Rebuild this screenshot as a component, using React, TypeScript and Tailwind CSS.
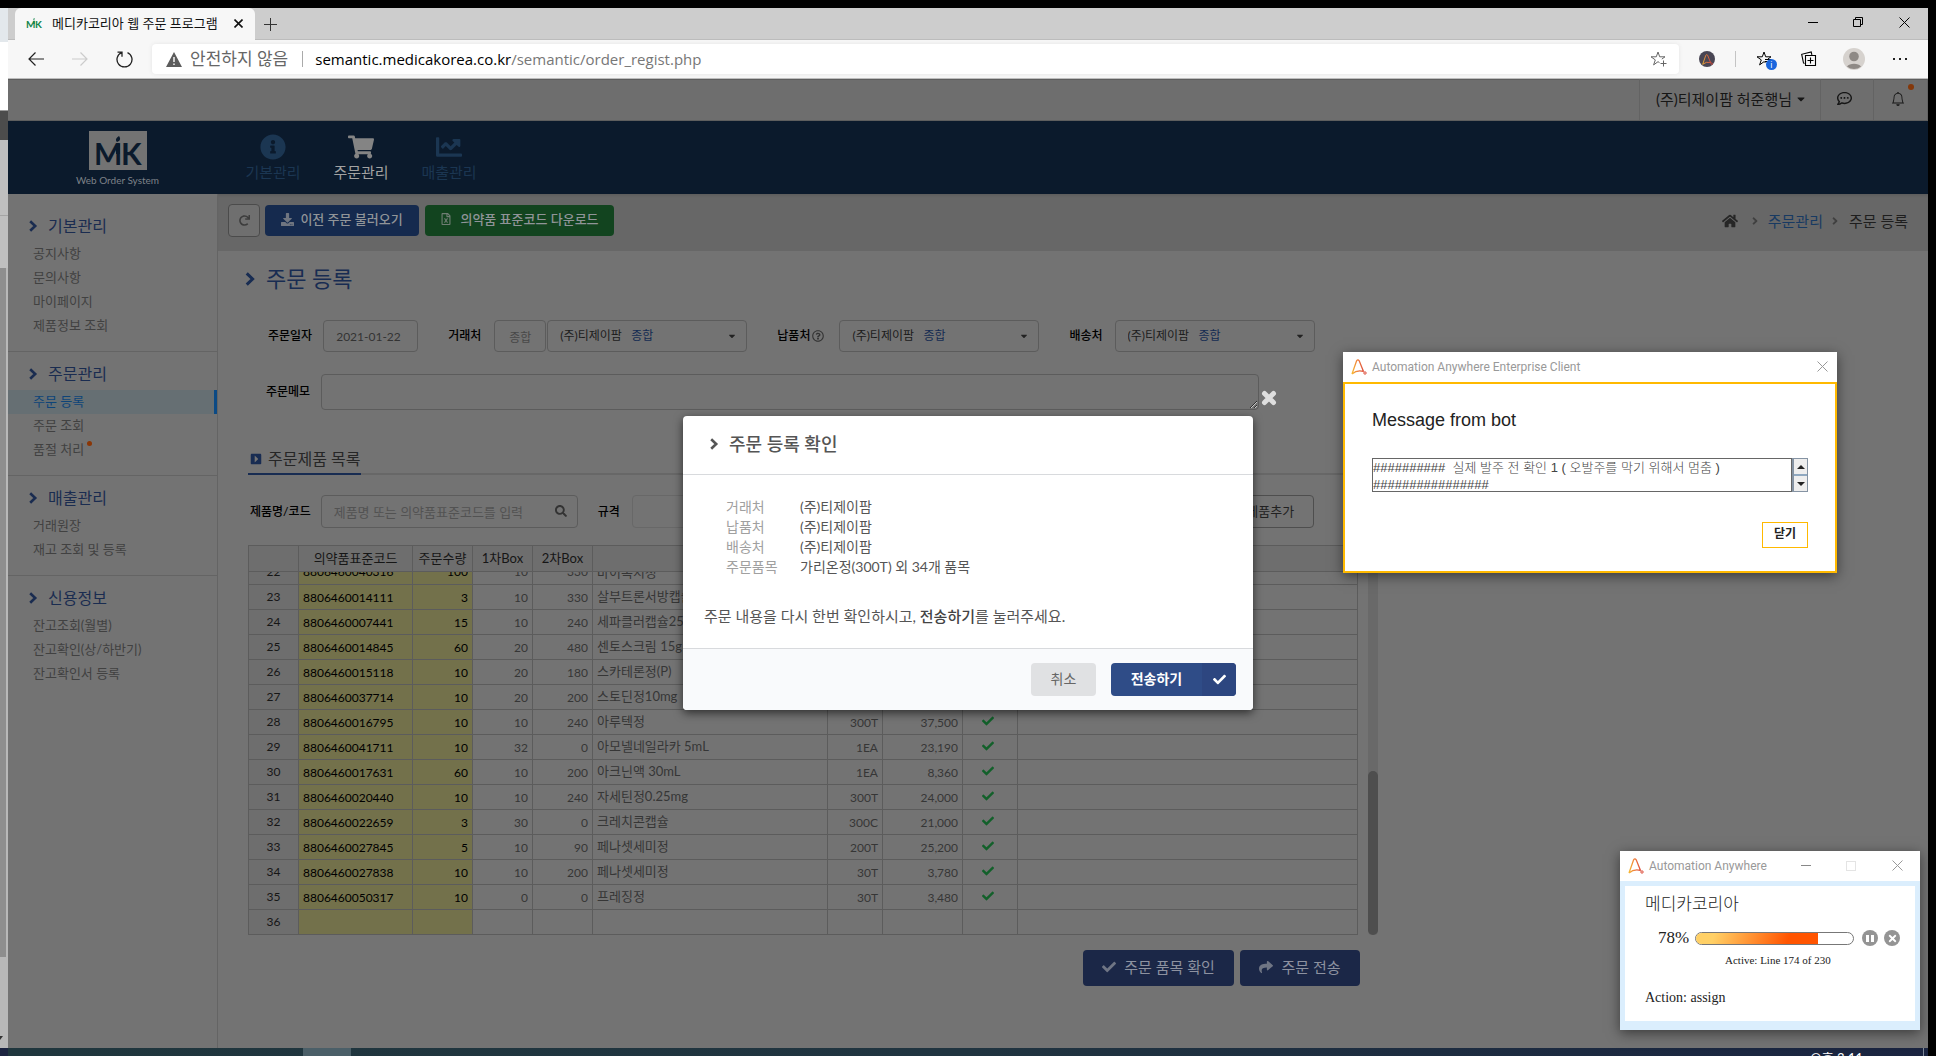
import React from "react";
import {
  FaInfoCircle, FaShoppingCart, FaChartLine, FaDownload, FaRegFileExcel, FaRedo, FaHome,
  FaAngleRight, FaCaretDown, FaRegCommentDots, FaCheck, FaShare, FaTimes,
  FaSearch, FaRegQuestionCircle, FaCaretSquareRight,
} from "react-icons/fa";
import { BsBell } from "react-icons/bs";

/* ---------- data ---------- */

type MenuItem = { label: string; active?: boolean; dot?: boolean };

const menu: { title: string; items: MenuItem[] }[] = [
  { title: "기본관리", items: [{ label: "공지사항" }, { label: "문의사항" }, { label: "마이페이지" }, { label: "제품정보 조회" }] },
  { title: "주문관리", items: [{ label: "주문 등록", active: true }, { label: "주문 조회" }, { label: "품절 처리", dot: true }] },
  { title: "매출관리", items: [{ label: "거래원장" }, { label: "재고 조회 및 등록" }] },
  { title: "신용정보", items: [{ label: "잔고조회(월별)" }, { label: "잔고확인(상/하반기)" }, { label: "잔고확인서 등록" }] },
];

type Row = [string, string, string, string, string, string, string, string];

const rows: Row[] = [
  ["23", "8806460014111", "3", "10", "330", "살부트론서방캡슐", "", ""],
  ["24", "8806460007441", "15", "10", "240", "세파클러캡슐250mg", "", ""],
  ["25", "8806460014845", "60", "20", "480", "센토스크림 15g", "", ""],
  ["26", "8806460015118", "10", "20", "180", "스카테론정(P)", "", ""],
  ["27", "8806460037714", "10", "20", "200", "스토딘정10mg", "", ""],
  ["28", "8806460016795", "10", "10", "240", "아루텍정", "300T", "37,500"],
  ["29", "8806460041711", "10", "32", "0", "아모넬네일라카 5mL", "1EA", "23,190"],
  ["30", "8806460017631", "60", "10", "200", "아크닌액 30mL", "1EA", "8,360"],
  ["31", "8806460020440", "10", "10", "240", "자세틴정0.25mg", "300T", "24,000"],
  ["32", "8806460022659", "3", "30", "0", "크레치콘캡슐", "300C", "21,000"],
  ["33", "8806460027845", "5", "10", "90", "페나셋세미정", "200T", "25,200"],
  ["34", "8806460027838", "10", "10", "200", "페나셋세미정", "30T", "3,780"],
  ["35", "8806460050317", "10", "0", "0", "프레징정", "30T", "3,480"],
  ["36", "", "", "", "", "", "", ""],
];

/* ---------- drawings ---------- */

function MkMark({ className }: { className: string }) {
  return (
    <svg viewBox="0 0 48 32" className={`overflow-visible ${className}`} fill="currentColor" aria-hidden="true">
      <text x="0" y="30" fontSize="30" fontWeight="700" fontFamily="Lato">M</text>
      <text x="27" y="30" fontSize="30" fontWeight="700" fontFamily="Lato">K</text>
      <path d="M23 7c-2-2-1-4 2-6 2 3 1 5-2 6z" />
      <rect x="22" y="9" width="4" height="10" />
    </svg>
  );
}

function Chevron({ className }: { className: string }) {
  return (
    <svg viewBox="0 0 10 12" className={className} fill="none" stroke="currentColor" strokeWidth="2.6" aria-hidden="true">
      <path d="M2.200 1.200 7.200 6l-5 4.800" />
    </svg>
  );
}

function AaLogo({ className, id }: { className: string; id: string }) {
  return (
    <svg viewBox="0 0 16 16" className={className} fill="none" aria-hidden="true">
      <defs>
        <linearGradient id={id} x1="0" y1="0" x2="1" y2="0">
          <stop offset="0" stopColor="#f7b832" />
          <stop offset="0.5" stopColor="#ee7b3c" />
          <stop offset="1" stopColor="#dd4f3c" />
        </linearGradient>
      </defs>
      <path d="M1 15 5.6 1.8Q6.9-.2 8.2 1.8L12.6 12.8M1 15Q6 10.6 12.4 12.4" stroke={`url(#${id})`} strokeWidth="1.3" />
      <circle cx="14" cy="14" r="1.2" stroke="#dd4f3c" />
    </svg>
  );
}

function StarIcon({ plus }: { plus?: boolean }) {
  return (
    <svg viewBox="0 0 17 17" className="size-[17px]" fill="none" stroke="currentColor" strokeWidth="1" aria-hidden="true">
      <path d="M9.5 11.6 8 10.7 3.6 13.9 5.3 8.9 1 5.8H6.3L8 1 9.7 5.8H15L11.8 8.1" />
      {plus ? <path d="M13.5 9.5v6M10.5 12.5h6" /> : <path d="M9 8.5h6M9 10.5h4" />}
    </svg>
  );
}

function BackArrow({ className }: { className: string }) {
  return (
    <svg viewBox="0 0 16 14" className={className} fill="none" stroke="currentColor" strokeWidth="1.2" aria-hidden="true">
      <path d="M7.5 0.5 1 7l6.500 6.500M1 7h15" />
    </svg>
  );
}

function CloseLines({ className }: { className: string }) {
  return (
    <svg viewBox="0 0 11 11" className={className} stroke="currentColor" strokeWidth="1" aria-hidden="true">
      <path d="M.5.5l10 10M10.500.5l-10 10" />
    </svg>
  );
}

/* ---------- browser chrome ---------- */

function TabStrip() {
  return (
    <div className="flex h-8 shrink-0 items-stretch bg-[#cdcdcd] pl-[7px] shadow-[inset_0_-1px_0_#bcbcbc]">
      <div className="flex w-[240px] items-center rounded-t-md bg-[#f7f7f7] pl-[11px] pr-3 pb-[2px]">
        <MkMark className="h-3 w-4 text-[#12854a]" />
        <span className="ml-[10px] flex-1 whitespace-nowrap text-[13px] leading-5 text-[#111]">메디카코리아 웹 주문 프로그램</span>
        <button type="button" aria-label="탭 닫기" className="text-[#111]">
          <svg viewBox="0 0 9 9" className="size-[9px]" stroke="currentColor" strokeWidth="1.6"><path d="M.5.5l8 8M8.500.5l-8 8" /></svg>
        </button>
      </div>
      <button type="button" aria-label="새 탭" className="ml-[9px] text-[#333]">
        <svg viewBox="0 0 13 13" className="size-[13px]" stroke="currentColor"><path d="M6.500 0v13M0 6.500h13" /></svg>
      </button>
      <div className="ml-auto flex w-[138px] items-center justify-around pb-1 text-black">
        <button type="button" aria-label="최소화">
          <svg viewBox="0 0 10 10" className="size-[10px]" stroke="currentColor"><path d="M0 5.500h10" /></svg>
        </button>
        <button type="button" aria-label="이전 크기로">
          <svg viewBox="0 0 10 10" className="size-[10px]" fill="none" stroke="currentColor"><path d="M.5 2.500h7v7h-7zM2.500 2.500v-2h7v7h-2" /></svg>
        </button>
        <button type="button" aria-label="닫기"><CloseLines className="size-[11px]" /></button>
      </div>
    </div>
  );
}

function AddressBar() {
  return (
    <div className="flex h-[39px] shrink-0 items-center border-b border-[#bdbdbd] bg-[#f7f7f7] pl-5 text-[#222]">
      <button type="button" aria-label="뒤로"><BackArrow className="h-[14px] w-4" /></button>
      <button type="button" aria-label="앞으로" className="ml-7 text-[#ccc]"><BackArrow className="h-[14px] w-4 -scale-x-100" /></button>
      <button type="button" aria-label="새로 고침" className="ml-7">
        <svg viewBox="0 0 17 17" className="size-[17px]" fill="none" stroke="currentColor" strokeWidth="1.300"><path d="M5.500 1.600A7.500 7.500 0 1 0 11.500 1.600M1.500 1.200h4.500v4.500" /></svg>
      </button>
      <div className="ml-[19px] flex h-[30px] flex-1 items-center rounded bg-white pl-[14px] pr-3 shadow-[0_0_4px_#e4e4e4]">
        <svg viewBox="0 0 16 15" className="h-[15px] w-4 text-[#5c5c5c]" aria-hidden="true">
          <path d="M8 0 16 15H0z" fill="currentColor" />
          <path d="M8 5v5M8 11.500v1.500" stroke="#fff" strokeWidth="1.400" />
        </svg>
        <span className="ml-2 text-[17px] leading-6 text-[#666]">안전하지 않음</span>
        <span className="ml-[14px] mr-3 h-4 w-px bg-[#aaa]" />
        <a href="#address" className="text-[15px] leading-6 text-black">
          semantic.medicakorea.co.kr<span className="text-[#777]">/semantic/order_regist.php</span>
        </a>
        <button type="button" aria-label="즐겨찾기 추가" className="ml-auto text-[#666]"><StarIcon plus /></button>
      </div>
      <div className="flex items-center pl-5 pr-[21px]">
        <span className="flex size-4 items-center justify-center rounded-full bg-[#494654]">
          <AaLogo className="size-[11px]" id="aa-ext" />
        </span>
        <span className="ml-5 h-4 w-px bg-[#c4c4c4]" />
        <button type="button" aria-label="즐겨찾기" className="relative ml-5 text-black">
          <StarIcon />
          <span className="absolute -right-1 top-2 size-[11px] rounded-full bg-[#1a66dd] text-[9px] leading-[11px] text-white">i</span>
        </button>
        <button type="button" aria-label="컬렉션" className="ml-[28px] text-black">
          <svg viewBox="0 0 16 16" className="size-4" fill="none" stroke="currentColor" strokeWidth="1.100">
            <path d="M4.500 4.500h10v10h-10zM9.500 6.500v6M6.500 9.500h6M3.500 12.500 2.500 12 .700 3.300 10.200 1l.7 2.800" />
          </svg>
        </button>
        <button type="button" aria-label="프로필" className="ml-[26px]">
          <svg viewBox="0 0 22 22" className="size-[22px]">
            <circle cx="11" cy="11" r="11" fill="#d6d2ce" />
            <circle cx="11" cy="8.500" r="4.800" fill="#8e8985" />
            <path d="M4 18.500a8 5.500 0 0 1 14 0A11 11 0 0 1 4 18.500z" fill="#8e8985" />
          </svg>
        </button>
        <button type="button" aria-label="설정 및 기타" className="ml-7 flex w-[14px] justify-between">
          <i className="size-[2px] bg-[#222]" /><i className="size-[2px] bg-[#222]" /><i className="size-[2px] bg-[#222]" />
        </button>
      </div>
    </div>
  );
}

/* ---------- order page ---------- */

function UserBar() {
  return (
    <div className="flex h-[42px] shrink-0 justify-end border-b border-[#5e5e5e] bg-[#6e6e6e] text-[#161616] shadow-[inset_0_1px_0_#5e5e5e]">
      <button type="button" className="flex items-center gap-[3px] border-l border-[#636363] pb-[2px] pl-4 pr-[13px] text-[15px] leading-5">
        (주)티제이팜 허준행님<FaCaretDown className="size-3" />
      </button>
      <button type="button" aria-label="메시지" className="flex w-[53px] items-center justify-center border-l border-[#636363] pb-[2px] pr-[6px]">
        <FaRegCommentDots className="size-[15px]" />
      </button>
      <button type="button" aria-label="알림" className="relative flex w-[55px] items-center justify-center border-x border-[#636363] pb-[2px] pr-[6px]">
        <BsBell className="size-[14px]" />
        <span className="absolute right-[13px] top-[5px] size-[6px] rounded-full bg-[#84380a]" />
      </button>
    </div>
  );
}

function TopNav() {
  const items = [
    { label: "기본관리", Icon: FaInfoCircle, on: false },
    { label: "주문관리", Icon: FaShoppingCart, on: true },
    { label: "매출관리", Icon: FaChartLine, on: false },
  ];
  return (
    <header className="flex h-[73px] shrink-0 bg-[#0b1a2c]">
      <a href="#home" className="flex w-[221px] flex-col items-center pr-[2px] pt-[10px]">
        <span className="flex h-[39px] w-[58px] items-center justify-center bg-[#737373]">
          <MkMark className="h-8 w-12 text-[#0b1a2c]" />
        </span>
        <span className="mt-[2px] text-[10px] leading-4 text-[#7d8188]">Web Order System</span>
      </a>
      <nav className="flex">
        {items.map(({ label, Icon, on }) => (
          <a key={label} href="#nav" className={`flex w-[88px] flex-col items-center pt-[13px] text-[15px] leading-5 ${on ? "text-[#848484]" : "text-[#1b3652]"}`}>
            <Icon className="size-[26px]" />
            <span className={on ? "mt-[2px] text-[#a2a2a2]" : "mt-[2px]"}>{label}</span>
          </a>
        ))}
      </nav>
    </header>
  );
}

function Sidebar() {
  return (
    <aside className="w-[210px] shrink-0 border-r border-[#646464] pt-[10px]">
      {menu.map((section) => (
        <section key={section.title} className="border-b border-[#646464] pb-[13px] pt-[6px] last:border-b-0">
          <h2 className="flex h-8 items-center gap-[10px] pl-5 text-[16px] text-[#1a2c50]">
            <Chevron className="h-3 w-[10px]" />
            <span className="leading-6">{section.title}</span>
          </h2>
          <ul>
            {section.items.map((it) => (
              <li key={it.label}>
                <a
                  href="#menu"
                  className={`flex h-6 items-center pb-[2px] pl-[25px] text-[13px] leading-[22px] ${it.active ? "border-r-[3px] border-[#0b4a85] bg-[#666f73] text-[#0d4479]" : "text-[#414141]"}`}
                >
                  {it.label}
                  {it.dot && <span className="mb-3 ml-[3px] size-[5px] rounded-full bg-[#8a3606]" />}
                </a>
              </li>
            ))}
          </ul>
        </section>
      ))}
    </aside>
  );
}

function PartnerSelect({ id }: { id: string }) {
  return (
    <div className="relative w-[200px]">
      <select id={id} className="h-8 w-full appearance-none rounded border border-[#5c5c5c] bg-transparent px-3 text-[12px] leading-4 text-[#1c1c1c]">
        <option>(주)티제이팜</option>
      </select>
      <span className="pointer-events-none absolute left-[84px] top-2 text-[12px] leading-4 text-[#152c52]">종합</span>
      <FaCaretDown className="pointer-events-none absolute right-[10px] top-[11px] size-[10px] text-[#222]" />
    </div>
  );
}

const labelStyle = "text-[12px] font-medium leading-4 text-black";

function OrderForm() {
  return (
    <form className="flex flex-col">
      <div className="mt-6 flex items-center pl-[50px]">
        <label htmlFor="date" className={labelStyle}>주문일자</label>
        <input id="date" defaultValue="2021-01-22" className="ml-[11px] h-8 w-[95px] rounded border border-[#5c5c5c] px-3 text-[12px] text-[#333]" />
        <label htmlFor="client" className={`${labelStyle} ml-[30px]`}>거래처</label>
        <input aria-label="구분" defaultValue="종합" className="ml-[13px] mr-px h-8 w-[52px] rounded border border-[#5c5c5c] pl-[14px] text-[12px] text-[#484848]" />
        <PartnerSelect id="client" />
        <label htmlFor="supply" className={`${labelStyle} ml-[30px] flex items-center`}>
          납품처<FaRegQuestionCircle className="ml-[2px] size-3 text-[#333]" />
        </label>
        <div className="ml-[15px]"><PartnerSelect id="supply" /></div>
        <label htmlFor="ship" className={`${labelStyle} ml-[30px]`}>배송처</label>
        <div className="ml-3"><PartnerSelect id="ship" /></div>
      </div>

      <div className="mt-[22px] flex h-9 items-center pl-[48px]">
        <label htmlFor="memo" className={labelStyle}>주문메모</label>
        <textarea id="memo" className="ml-[11px] h-9 w-[938px] resize rounded border border-[#5c5c5c]" />
      </div>

      <div className="ml-[30px] mt-[37px] flex w-[1130px] border-b-2 border-[#676767]">
        <h2 className="-mb-[2px] flex h-7 items-center gap-[6px] border-b-2 border-[#182c52] pb-[2px] pl-[2px] pr-px text-[16px] leading-6 text-[#262626]">
          <FaCaretSquareRight className="size-3 text-[#182c52]" />주문제품 목록
        </h2>
      </div>

      <div className="mt-5 flex items-center pl-8">
        <label htmlFor="product" className={labelStyle}>제품명/코드</label>
        <div className="relative ml-[10px]">
          <input id="product" placeholder="제품명 또는 의약품표준코드를 입력" className="h-[33px] w-[257px] rounded border border-[#5c5c5c] px-3 text-[13px] placeholder:text-[#525252]" />
          <FaSearch className="absolute right-[11px] top-[10px] size-3 text-[#333]" />
        </div>
        <label htmlFor="spec" className={`${labelStyle} ml-5`}>규격</label>
        <input id="spec" className="ml-3 h-[33px] w-[120px] rounded border border-[#686868]" />
        <button type="button" className="ml-[464px] h-[33px] w-[98px] whitespace-nowrap rounded border border-[#4e4e4e] text-[13px] text-[#222]">+ 제품추가</button>
      </div>
    </form>
  );
}

const cell = "border border-[#5c5c5c]";

function ClippedText({ children }: { children: string }) {
  return <div className="flex h-3 items-end overflow-hidden"><span className="w-full shrink-0 leading-6">{children}</span></div>;
}

function OrderTable() {
  return (
    <div className="ml-[30px] mt-[17px] flex">
      <table className="w-[1110px] table-fixed border-collapse text-[12px] leading-[23px] text-[#363636]">
        <colgroup>
          <col className="w-[50px]" /><col className="w-[114px]" /><col className="w-[60px]" /><col className="w-[60px]" /><col className="w-[60px]" />
          <col className="w-[235px]" /><col className="w-[55px]" /><col className="w-[80px]" /><col className="w-[55px]" /><col />
        </colgroup>
        <thead>
          <tr className="h-[26px] bg-[#6e6e6e] text-[13px] text-[#161616]">
            {["", "의약품표준코드", "주문수량", "1차Box", "2차Box", "", "", "", "", ""].map((h, i) => (
              <th key={i} scope="col" className={`${cell} p-0 pb-[2px] font-normal leading-5`}>{h}</th>
            ))}
          </tr>
        </thead>
        <tbody>
          <tr className="h-[13px]">
            <td className={`${cell} bg-[#6e6e6e] p-0 text-center text-[#161616]`}><ClippedText>22</ClippedText></td>
            <td className={`${cell} bg-[#73714b] px-1 py-0 text-black`}><ClippedText>8806460040316</ClippedText></td>
            <td className={`${cell} bg-[#73714b] px-1 py-0 text-right text-black`}><ClippedText>100</ClippedText></td>
            <td className={`${cell} px-1 py-0 text-right`}><ClippedText>10</ClippedText></td>
            <td className={`${cell} px-1 py-0 text-right`}><ClippedText>330</ClippedText></td>
            <td className={`${cell} px-1 py-0 text-[13px]`}><ClippedText>바이독시정</ClippedText></td>
            <td className={cell} /><td className={cell} /><td className={cell} /><td className={cell} />
          </tr>
          {rows.map((r) => (
            <tr key={r[0]} className="h-[25px]">
              <td className={`${cell} bg-[#6e6e6e] p-0 pb-px text-center text-[#161616]`}>{r[0]}</td>
              <td className={`${cell} bg-[#73714b] px-1 py-0 text-black`}>{r[1]}</td>
              <td className={`${cell} bg-[#73714b] px-1 py-0 text-right text-black`}>{r[2]}</td>
              <td className={`${cell} px-1 py-0 text-right`}>{r[3]}</td>
              <td className={`${cell} px-1 py-0 text-right`}>{r[4]}</td>
              <td className={`${cell} whitespace-nowrap px-1 py-0 pb-px text-[13px]`}>{r[5]}</td>
              <td className={`${cell} px-1 py-0 text-right`}>{r[6]}</td>
              <td className={`${cell} px-1 py-0 text-right`}>{r[7]}</td>
              <td className={`${cell} p-0 pb-[3px]`}>{r[1] && <FaCheck className="ml-auto mr-[23px] size-3 text-[#12602a]" />}</td>
              <td className={cell} />
            </tr>
          ))}
        </tbody>
      </table>
      <div className="ml-[10px] flex w-[10px] flex-col justify-end rounded bg-[#696969]">
        <div className="h-[42%] rounded-full bg-[#4e4e4e]" />
      </div>
    </div>
  );
}

function OrderPage() {
  return (
    <main className="min-w-0 flex-1">
      <div className="flex h-[57px] items-center justify-between bg-[#676767] pb-[4px] pl-[10px] pr-5 shadow-[inset_0_3px_3px_-2px_#5a5a5a]">
        <div className="flex items-center text-[13px] font-medium leading-5 text-[#909498]">
          <button type="button" aria-label="새로 고침" className="flex h-[33px] w-8 items-center justify-center rounded border border-[#4b4b4b] bg-[#6f6f6f] text-[#3c3c3c]">
            <FaRedo className="size-[11px]" />
          </button>
          <button type="button" className="ml-[5px] flex h-[31px] w-[154px] items-center justify-center gap-[6px] rounded bg-[#152a4e] pb-[3px]">
            <FaDownload className="size-[13px] text-[#6f7580]" />이전 주문 불러오기
          </button>
          <button type="button" className="ml-[6px] flex h-[31px] w-[189px] items-center justify-center gap-2 rounded bg-[#12441f] pb-[3px]">
            <FaRegFileExcel className="size-3 text-[#6f7d73]" />의약품 표준코드 다운로드
          </button>
        </div>
        <nav className="flex items-center text-[15px] leading-5 text-[#1e1e1e]">
          <FaHome className="size-4 text-[#262626]" />
          <FaAngleRight className="ml-[11px] mr-[7px] size-3 text-[#404040]" />
          <a href="#orders" className="text-[#183a62]">주문관리</a>
          <FaAngleRight className="ml-[6px] mr-2 size-3 text-[#404040]" />
          <span>주문 등록</span>
        </nav>
      </div>
      <h1 className="mt-3 flex h-[33px] items-center gap-[10px] whitespace-nowrap pb-[2px] pl-[26px] text-[22px] leading-8 text-[#182c52]">
        <Chevron className="h-[14px] w-3" />주문 등록
      </h1>
      <OrderForm />
      <OrderTable />
      <div className="mt-[15px] flex w-[1142px] justify-end gap-[6px] text-[15px] leading-5 text-[#8d92a0]">
        <button type="button" className="flex h-9 w-[151px] items-center justify-center gap-2 rounded bg-[#1b2747] pb-[2px]">
          <FaCheck className="size-[14px] text-[#6f7584]" />주문 품목 확인
        </button>
        <button type="button" className="flex h-9 w-[120px] items-center justify-center gap-2 rounded bg-[#1b2747] pb-[2px]">
          <FaShare className="size-[14px] text-[#6f7584]" />주문 전송
        </button>
      </div>
    </main>
  );
}

function ConfirmModal() {
  const info = [
    ["거래처", "(주)티제이팜"],
    ["납품처", "(주)티제이팜"],
    ["배송처", "(주)티제이팜"],
    ["주문품목", "가리온정(300T) 외 34개 품목"],
  ];
  return (
    <div role="dialog" aria-label="주문 등록 확인" className="pointer-events-auto relative w-[570px] rounded bg-white text-[#555] shadow-[0_3px_10px_rgba(0,0,0,0.6)]">
      <button type="button" aria-label="닫기" className="absolute -right-6 -top-[26px] text-[#dedede]">
        <svg viewBox="0 0 16 16" className="size-4" stroke="currentColor" strokeWidth="5" strokeLinecap="round"><path d="M3.500 3.500l9 9M12.500 3.500l-9 9" /></svg>
      </button>
      <div className="flex h-[59px] items-center gap-[10px] border-b border-[#d8dadd] pb-[2px] pl-[26px] text-[18px] font-medium leading-6">
        <Chevron className="h-3 w-[10px]" />주문 등록 확인
      </div>
      <div className="h-[174px] border-b border-[#d8dadd] pl-[21px] pt-[22px]">
        <dl className="grid grid-cols-[74px_1fr] pl-[22px] text-[14px] leading-5">
          {info.map(([k, v]) => (
            <React.Fragment key={k}>
              <dt className="text-[#a0a0a0]">{k}</dt>
              <dd>{v}</dd>
            </React.Fragment>
          ))}
        </dl>
        <p className="mt-[29px] text-[15px] leading-5">
          주문 내용을 다시 한번 확인하시고, <b className="font-medium text-[#444]">전송하기</b>를 눌러주세요.
        </p>
      </div>
      <div className="flex h-[61px] items-center justify-end gap-[15px] rounded-b bg-[#f9fafc] pr-[17px] text-[14px] leading-5">
        <button type="button" className="h-[33px] w-[65px] rounded bg-[#e0e1e3] pb-[2px] text-[#666]">취소</button>
        <button type="button" className="flex h-[33px] w-[125px] items-center overflow-hidden rounded bg-[#2f4c87] font-bold text-white">
          <span className="flex-1 pb-[2px]">전송하기</span>
          <span className="flex h-full w-[34px] items-center justify-center bg-[#2d4680]"><FaCheck className="size-[13px]" /></span>
        </button>
      </div>
    </div>
  );
}

/* ---------- desktop windows ---------- */

function BotMessage() {
  return (
    <section className="absolute right-[99px] top-[352px] w-[494px] bg-white shadow-[0_3px_12px_rgba(0,0,0,0.5)]">
      <div className="flex h-[30px] items-center pb-px pl-2 pr-[9px] text-[#999]">
        <AaLogo className="size-4" id="aa-msg" />
        <span className="ml-[5px] flex-1 font-[family-name:Roboto] text-[12px] leading-5">Automation Anywhere Enterprise Client</span>
        <button type="button" aria-label="닫기"><CloseLines className="size-[11px]" /></button>
      </div>
      <div className="flex h-[191px] flex-col border-2 border-[#ffb900] pl-[27px] pr-[27px] pt-6">
        <h2 className="font-[family-name:'Liberation_Sans'] text-[18px] leading-6 text-[#222]">Message from bot</h2>
        <div className="mt-[26px] flex h-[34px]">
          <div className="flex-1 overflow-hidden border border-[#666] font-[family-name:'Liberation_Sans','Noto_Sans_CJK_KR',sans-serif] text-[13px] leading-[17px] text-[#444]">
            <p className="whitespace-pre font-light">##########  실제 발주 전 확인 1 ( 오발주를 막기 위해서 멈춤 )</p>
            <p>################</p>
          </div>
          <div className="flex w-4 flex-col border border-l-2 border-[#8593a3] text-[#222]">
            <button type="button" aria-label="위로" className="flex flex-1 items-center justify-center border-b-2 border-[#8fa8c0] bg-[#eee]">
              <svg viewBox="0 0 8 4" className="h-1 w-2" fill="currentColor"><path d="M0 4 4 0l4 4z" /></svg>
            </button>
            <button type="button" aria-label="아래로" className="flex flex-1 items-center justify-center bg-[#eee]">
              <svg viewBox="0 0 8 4" className="h-1 w-2" fill="currentColor"><path d="M0 0l4 4 4-4z" /></svg>
            </button>
          </div>
        </div>
        <button type="button" className="mt-[30px] h-[26px] w-[46px] self-end border border-[#ffb900] pb-[2px] text-[12px] font-bold leading-4 text-[#222]">닫기</button>
      </div>
    </section>
  );
}

function BotProgress() {
  return (
    <section className="absolute bottom-[26px] right-4 w-[300px] bg-white shadow-[0_3px_12px_rgba(0,0,0,0.5)]">
      <div className="flex h-[30px] items-center pb-px pl-2 pr-[17px] text-[#999]">
        <AaLogo className="size-4" id="aa-run" />
        <span className="ml-[5px] flex-1 font-[family-name:Roboto] text-[12px] leading-5">Automation Anywhere</span>
        <button type="button" aria-label="최소화" className="h-px w-[10px] bg-[#888]" />
        <button type="button" aria-label="최대화" className="ml-[35px] size-[10px] border border-[#e4e4e4]" />
        <button type="button" aria-label="닫기" className="ml-9"><CloseLines className="size-[11px]" /></button>
      </div>
      <div className="border-x-[5px] border-b-[9px] border-t-[5px] border-[#dbeefd] pb-[13px] pl-5 pt-2 font-[family-name:'Liberation_Serif','Noto_Sans_CJK_KR',serif] text-[#222]">
        <h2 className="text-[17px] font-light leading-[22px]">메디카코리아</h2>
        <div className="mt-3 flex items-center pl-[13px]">
          <span className="w-[37px] text-[17px] leading-5">78%</span>
          <div role="progressbar" aria-label="진행률" aria-valuenow={78} className="h-[13px] w-[159px] overflow-hidden rounded-full border border-[#777]">
            <div className="h-full w-[78%] bg-linear-[110deg,#ffd066_15%,#ff5400_75%]" />
          </div>
          <button type="button" aria-label="일시 중지" className="ml-2 flex size-4 items-center justify-center gap-[2px] rounded-full bg-[#949494]">
            <i className="h-[7px] w-[3px] bg-white" /><i className="h-[7px] w-[3px] bg-white" />
          </button>
          <button type="button" aria-label="중지" className="ml-[6px] flex size-4 items-center justify-center rounded-full bg-[#949494] text-white">
            <FaTimes className="size-[11px]" />
          </button>
        </div>
        <p className="mt-1 pl-20 text-[11px] leading-4">Active: Line 174 of 230</p>
        <p className="mt-5 text-[14px] leading-5">Action: assign</p>
      </div>
    </section>
  );
}

function WindowBehind() {
  return (
    <div className="flex w-2 shrink-0 flex-col bg-[#b8b8b8]" aria-hidden="true">
      <div className="h-[34px] bg-[#e3e8ec]" />
      <div className="h-[68px] bg-white" />
      <div className="h-[30px] border-t border-[#999] bg-[#4c4c4c]" />
      <div className="h-[76px] border-b border-[#a5a5a5] bg-[#bfbfbf]" />
      <div className="h-[52px] bg-[#bfbfbf]" />
      <div className="h-[689px] w-[6px] bg-[#8e8e8e]" />
      <svg viewBox="0 0 6 4" className="mt-auto mb-2 h-1 w-[6px]"><path d="M0 0h3L0 4z" fill="#333" /></svg>
    </div>
  );
}

export default function App() {
  return (
    <div lang="ko" className="relative flex h-screen min-h-[1056px] flex-col overflow-hidden bg-black pt-2 font-[family-name:Lato,'Noto_Sans_CJK_KR',sans-serif]">
      <div className="flex min-h-0 flex-1 pr-2">
        <WindowBehind />
        <div className="flex min-w-0 flex-1 flex-col bg-[#737373]">
          <div className="font-[family-name:'Open_Sans','Noto_Sans_CJK_KR',sans-serif]">
            <TabStrip />
            <AddressBar />
          </div>
          <UserBar />
          <TopNav />
          <div className="flex min-h-0 flex-1">
            <Sidebar />
            <OrderPage />
          </div>
        </div>
      </div>
      <footer className="mr-2 flex h-2 shrink-0 overflow-hidden bg-linear-to-r from-[#1f363d] via-[#203440] to-[#1a2440]">
        <div className="w-2 bg-[#1c2440]" />
        <div className="ml-[295px] w-12 bg-[#4b5f68]" />
        <time className="ml-auto mr-[60px] pt-[2px] text-[13px] leading-4 text-white">오후 3:11</time>
        <div className="mr-1 w-px bg-[#7d8798]" />
      </footer>
      <div className="pointer-events-none absolute inset-x-2 top-[416px] flex justify-center">
        <ConfirmModal />
      </div>
      <BotMessage />
      <BotProgress />
    </div>
  );
}
